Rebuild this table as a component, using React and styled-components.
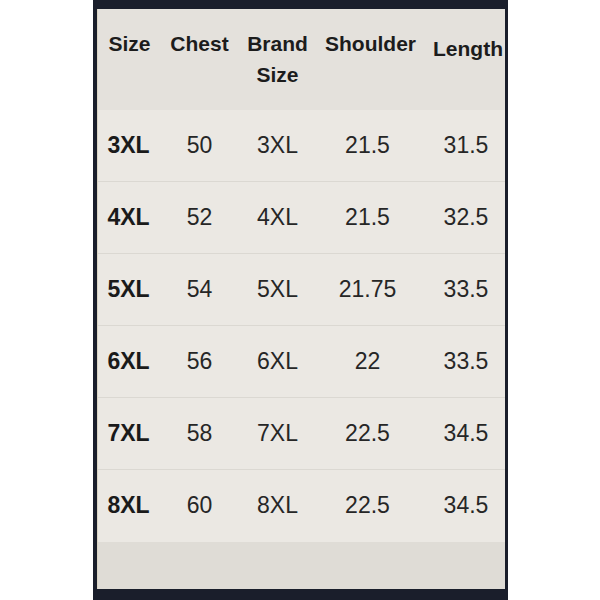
import React from 'react';
import styled, { createGlobalStyle } from 'styled-components';

const Global = createGlobalStyle`
  html, body {
    margin: 0;
    padding: 0;
    background: #ffffff;
  }
  body {
    font-family: 'Liberation Sans', Arial, sans-serif;
  }
`;

const Frame = styled.div`
  width: 415px;
  height: 600px;
  margin: 0 auto;
  box-sizing: border-box;
  padding: 9px 3px 11px 4px;
  background: #1a1e2b;
`;

const Panel = styled.div`
  height: 100%;
  display: flex;
  flex-direction: column;
  background: #ebe8e3;
  border-left: 1px solid #d9d3c2;
  box-sizing: border-box;
`;

const Row = styled.div`
  display: grid;
  grid-template-columns: 64px 76px 80px 104px 83px;
  align-items: center;
  height: ${(p) => p.$h}px;
  box-sizing: border-box;
  border-bottom: 1px solid ${(p) => (p.$line ? '#dbd8d2' : 'transparent')};
  background: ${(p) => p.$bg || 'transparent'};
`;

const HeadCell = styled.div`
  align-self: start;
  padding-top: ${(p) => p.$pt || 19}px;
  text-align: center;
  font-size: 21px;
  font-weight: bold;
  line-height: 31px;
  color: #1c1c1c;
  white-space: nowrap;
  transform: translateX(${(p) => p.$dx || 0}px);
`;

const Cell = styled.div`
  text-align: center;
  font-size: 23px;
  font-weight: ${(p) => (p.$bold ? 'bold' : 'normal')};
  color: ${(p) => (p.$bold ? '#1a1a1a' : '#262626')};
  transform: translateX(${(p) => p.$dx || 0}px);
`;

const Footer = styled.div`
  flex: 1;
  background: #dfdcd6;
`;

const rows = [
  ['3XL', '50', '3XL', '21.5', '31.5'],
  ['4XL', '52', '4XL', '21.5', '32.5'],
  ['5XL', '54', '5XL', '21.75', '33.5'],
  ['6XL', '56', '6XL', '22', '33.5'],
  ['7XL', '58', '7XL', '22.5', '34.5'],
  ['8XL', '60', '8XL', '22.5', '34.5'],
];

export default function App() {
  return (
    <>
      <Global />
      <Frame>
        <Panel>
          <Row $h={101} $bg="#e4e1dc">
            <HeadCell>Size</HeadCell>
            <HeadCell>Chest</HeadCell>
            <HeadCell>Brand<br />Size</HeadCell>
            <HeadCell $dx={1}>Shoulder</HeadCell>
            <HeadCell $pt={24} $dx={5}>Length</HeadCell>
          </Row>
          {rows.map((r, i) => (
            <Row key={i} $h={72} $line={i < rows.length - 1}>
              <Cell $bold $dx={-1}>{r[0]}</Cell>
              <Cell>{r[1]}</Cell>
              <Cell>{r[2]}</Cell>
              <Cell $dx={-2}>{r[3]}</Cell>
              <Cell $dx={3}>{r[4]}</Cell>
            </Row>
          ))}
          <Footer />
        </Panel>
      </Frame>
    </>
  );
}
